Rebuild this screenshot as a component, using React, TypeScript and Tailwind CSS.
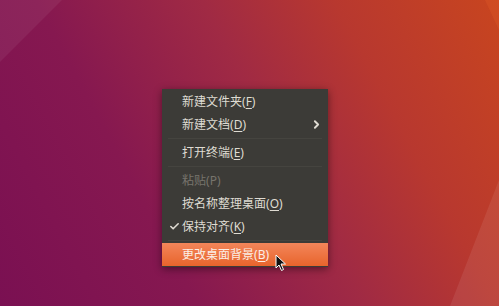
import { Check, ChevronRight } from 'lucide-react';

type Item =
  | { kind: 'item'; label: string; key: string; disabled?: boolean; checked?: boolean; submenu?: boolean; active?: boolean }
  | { kind: 'sep' };

const ITEMS: Item[] = [
  { kind: 'item', label: '新建文件夹', key: 'F' },
  { kind: 'item', label: '新建文档', key: 'D', submenu: true },
  { kind: 'sep' },
  { kind: 'item', label: '打开终端', key: 'E' },
  { kind: 'sep' },
  { kind: 'item', label: '粘贴', key: 'P', disabled: true },
  { kind: 'item', label: '按名称整理桌面', key: 'O' },
  { kind: 'item', label: '保持对齐', key: 'K', checked: true },
  { kind: 'sep' },
  { kind: 'item', label: '更改桌面背景', key: 'B', active: true },
];

export default function App() {
  return (
    <div
      className="relative w-[499px] h-[306px] overflow-hidden bg-[linear-gradient(62deg,#7a1052_0%,#861850_30%,#a02a44_55%,#b8382f_75%,#c8451f_100%)]"
      style={{ fontFamily: '"Noto Sans", "Noto Sans CJK SC", sans-serif' }}
    >
      {/* wallpaper facets */}
      <svg className="absolute inset-0" width="499" height="306" viewBox="0 0 499 306">
        <polygon points="0,0 62,0 0,62" fill="#ffffff" opacity="0.06" />
        <polygon points="485,0 499,0 499,30" fill="#ff7a30" opacity="0.15" />
        <polygon points="499,180 499,306 450,306" fill="#ffffff" opacity="0.08" />
      </svg>

      <div className="absolute left-[162px] top-[89px] w-[166px] bg-[#3c3b37] py-px shadow-[0_2px_8px_rgba(0,0,0,0.45)]">
        {ITEMS.map((it, i) =>
          it.kind === 'sep' ? (
            <div key={i} className="h-[5px] flex items-center px-[6px]">
              <div className="h-px w-full bg-[#33322e] border-b border-[#45443f]" />
            </div>
          ) : (
            <div
              key={i}
              className={
                'relative flex items-center h-[23px] pl-[20px] pr-[5px] text-[12px] leading-none ' +
                (it.active
                  ? 'bg-[linear-gradient(#f3865a,#e8642c)] text-[#fbeee6]'
                  : it.disabled
                  ? 'text-[#77746c]'
                  : 'text-[#dfdbd2]')
              }
            >
              {it.checked && (
                <Check className="absolute left-[7px] top-[6px] w-[11px] h-[11px] text-[#dfdbd2]" strokeWidth={3.5} />
              )}
              <span>
                {it.label}(<span className={it.disabled ? '' : 'underline underline-offset-2'}>{it.key}</span>)
              </span>
              {it.submenu && (
                <ChevronRight className="ml-auto w-[13px] h-[13px] text-[#dfdbd2]" strokeWidth={3.5} />
              )}
            </div>
          )
        )}
      </div>

      {/* mouse pointer */}
      <svg className="absolute left-[275px] top-[254px]" width="12" height="18" viewBox="0 0 12 18">
        <path d="M1 1 L1 14 L4 11 L6.5 16.5 L8.5 15.5 L6 10 L10.5 10 Z" fill="#111" stroke="#fff" strokeWidth="1" strokeLinejoin="round" />
      </svg>
    </div>
  );
}
